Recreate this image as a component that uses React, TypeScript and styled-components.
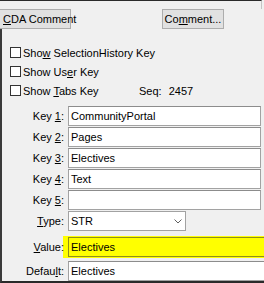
import React from "react";
import styled, { createGlobalStyle } from "styled-components";

const GlobalStyle = createGlobalStyle`
  html, body { margin: 0; padding: 0; background: #f0f0f0; }
  * { box-sizing: border-box; }
`;

const Frame = styled.div`
  width: 264px;
  height: 283px;
  overflow: hidden;
  display: flex;
  flex-direction: column;
  background: #f0f0f0;
  font-family: "Liberation Sans Narrow", "Liberation Sans", Arial, sans-serif;
  font-size: 11px;
  color: #000;
`;

const TopEdge = styled.div`
  flex-shrink: 0;
  width: 262px;
  height: 9px;
  border-top: 1px solid #2a2a2a;
  border-right: 1px solid #c4c4c4;
`;

const ButtonRow = styled.div`
  display: flex;
  flex-shrink: 0;
  height: 20px;
`;

const Button = styled.div<{ $w: number; $ml: number; $pl?: number }>`
  width: ${(p) => p.$w}px;
  margin-left: ${(p) => p.$ml}px;
  height: 20px;
  border: 1px solid #adadad;
  background: #e1e1e1;
  display: flex;
  align-items: center;
  justify-content: ${(p) => (p.$pl !== undefined ? "flex-start" : "center")};
  padding-left: ${(p) => p.$pl ?? 0}px;
  white-space: nowrap;
`;

const Body = styled.div`
  flex: 1;
  display: flex;
  flex-direction: column;
  border-left: 2px solid #3a3a3a;
  border-bottom: 2px solid #2a2a2a;
  padding-top: 14px;
`;

const CheckRow = styled.div`
  display: flex;
  align-items: center;
  height: 19px;
  padding-left: 8px;
`;

const CheckItem = styled.div`
  display: flex;
  align-items: center;
  width: 129px;
  white-space: nowrap;
`;

const Box = styled.span`
  width: 11px;
  height: 11px;
  border: 1px solid #333;
  background: #fff;
  margin-right: 2px;
  flex-shrink: 0;
`;

const Seq = styled.span`
  white-space: nowrap;
`;

const SeqValue = styled.span`
  margin-left: 7px;
`;

const FieldRow = styled.div<{ $mt: number }>`
  display: grid;
  grid-template-columns: 62px 1fr;
  column-gap: 4px;
  align-items: center;
  margin-top: ${(p) => p.$mt}px;
`;

const Label = styled.span`
  position: relative;
  z-index: 1;
  text-align: right;
  white-space: nowrap;
`;

const TextBox = styled.div<{ $h?: number; $mr: number }>`
  height: ${(p) => p.$h ?? 20}px;
  margin-right: ${(p) => p.$mr}px;
  border: 1px solid #a2a2a2;
  border-top-color: #8c8c8c;
  background: #fff;
  padding-left: 2px;
  display: flex;
  align-items: center;
  white-space: nowrap;
  overflow: hidden;
`;

const SelectBox = styled.div`
  width: 118px;
  height: 20px;
  border: 1px solid #a2a2a2;
  background: #fff;
  padding: 0 3px 0 2px;
  display: flex;
  align-items: center;
  justify-content: space-between;
`;

const Highlight = styled.div`
  margin-left: -5px;
  margin-right: -10px;
  height: 22px;
  padding: 1px 0 1px 5px;
  background: #ffff00;
  display: flex;
`;

const HighlightInput = styled.div`
  flex: 1;
  height: 20px;
  border: 1px solid #8f8f1a;
  padding-left: 2px;
  display: flex;
  align-items: center;
  white-space: nowrap;
`;

const U = styled.span`
  text-decoration: underline;
`;

const Chevron = () => (
  <svg width="8" height="5" viewBox="0 0 8 5">
    <path d="M0.5 0.5 L4 4 L7.5 0.5" fill="none" stroke="#606060" strokeWidth="1" />
  </svg>
);

const keys = ["CommunityPortal", "Pages", "Electives", "Text", ""];

export default function App() {
  return (
    <Frame>
      <GlobalStyle />
      <TopEdge />
      <ButtonRow>
        <Button $w={72} $ml={-1} $pl={3}>
          <span>
            <U>C</U>DA Comment
          </span>
        </Button>
        <Button $w={62} $ml={91}>
          <span>
            Co<U>m</U>ment...
          </span>
        </Button>
      </ButtonRow>
      <Body>
        <CheckRow>
          <CheckItem>
            <Box />
            <span>
              Sho<U>w</U> SelectionHistory Key
            </span>
          </CheckItem>
        </CheckRow>
        <CheckRow>
          <CheckItem>
            <Box />
            <span>
              Show Us<U>e</U>r Key
            </span>
          </CheckItem>
        </CheckRow>
        <CheckRow>
          <CheckItem>
            <Box />
            <span>
              Show <U>T</U>abs Key
            </span>
          </CheckItem>
          <Seq>
            Seq:<SeqValue>2457</SeqValue>
          </Seq>
        </CheckRow>
        {keys.map((k, i) => (
          <FieldRow key={i} $mt={i === 0 ? 6 : 1}>
            <Label>
              Key <U>{i + 1}</U>:
            </Label>
            <TextBox $mr={3}>{k}</TextBox>
          </FieldRow>
        ))}
        <FieldRow $mt={1}>
          <Label>
            <U>T</U>ype:
          </Label>
          <SelectBox>
            <span>STR</span>
            <Chevron />
          </SelectBox>
        </FieldRow>
        <FieldRow $mt={5}>
          <Label>
            <U>V</U>alue:
          </Label>
          <Highlight>
            <HighlightInput>Electives</HighlightInput>
          </Highlight>
        </FieldRow>
        <FieldRow $mt={3}>
          <Label>
            Defau<U>l</U>t:
          </Label>
          <TextBox $h={20} $mr={-10}>Electives</TextBox>
        </FieldRow>
      </Body>
    </Frame>
  );
}
